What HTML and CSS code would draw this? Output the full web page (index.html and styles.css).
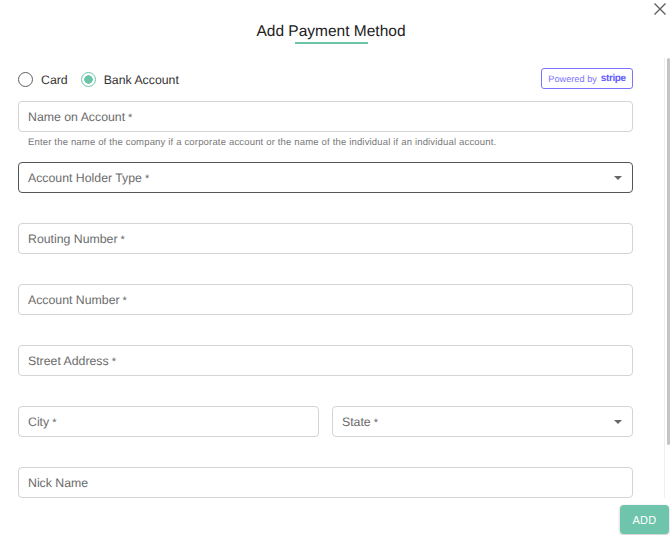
FILE: index.html
```html
<!DOCTYPE html>
<html lang="en">
<head>
    <meta charset="UTF-8">
    <meta name="viewport" content="width=device-width, initial-scale=1.0">
    <title>Add Payment Method</title>
    <link rel="stylesheet" href="styles.css">
</head>
<body>
    <div class="dialog">
        <svg class="close" width="14" height="14" viewBox="0 0 14 14" aria-label="Close">
            <path d="M1.5 1.5L12.5 12.5M12.5 1.5L1.5 12.5" stroke="#5f5f5f" stroke-width="1.4" fill="none"/>
        </svg>

        <div class="head">
            <h1 class="title">Add Payment Method</h1>
            <div class="underline"></div>
        </div>

        <div class="body">
            <div class="track"><div class="thumb"></div></div>
            <div class="type_row">
                <div class="radios">
                    <div class="radio"><span class="dot"></span>Card</div>
                    <div class="radio"><span class="dot checked"></span>Bank Account</div>
                </div>
                <div class="stripe">Powered by <b>stripe</b></div>
            </div>

            <div class="field">Name on Account<span class="req">*</span></div>
            <p class="helper">Enter the name of the company if a corporate account or the name of the individual if an individual account.</p>

            <div class="field select focus">Account Holder Type<span class="req">*</span></div>
            <div class="field gap">Routing Number<span class="req">*</span></div>
            <div class="field gap">Account Number<span class="req">*</span></div>
            <div class="field gap">Street Address<span class="req">*</span></div>
            <div class="split gap">
                <div class="field">City<span class="req">*</span></div>
                <div class="field select">State<span class="req">*</span></div>
            </div>
            <div class="field gap">Nick Name</div>
        </div>

        <div class="foot">
            <button class="add">ADD</button>
        </div>
    </div>
</body>
</html>
```

FILE: styles.css
```css
body {
    margin: 0;
    background-color: #fff;
    overflow: hidden;
    font-family: "Liberation Sans", Arial, sans-serif;
    text-rendering: geometricPrecision;
}

.dialog {
    position: relative;
    width: 670px;
    height: 535px;
    box-sizing: border-box;
    padding-top: 21px;
}

.close {
    position: absolute;
    top: 2px;
    right: 3px;
}

.head {
    display: flex;
    flex-direction: column;
    align-items: center;
    padding-right: 8px;
}

.title {
    margin: 0;
    font-size: 15.5px;
    font-weight: normal;
    line-height: 21px;
    color: #222;
}

.underline {
    width: 73px;
    height: 2px;
    background-color: #6cc5a9;
}

.body {
    position: relative;
    padding: 23px 37px 0 18px;
}

.track {
    position: absolute;
    top: 14px;
    right: 0;
    box-sizing: border-box;
    width: 6px;
    height: 440px;
    border-left: 1px solid #efefef;
}

.thumb {
    position: absolute;
    top: 0;
    right: 0;
    width: 3px;
    height: 387px;
    border-radius: 2px;
    background-color: #c4c4c4;
}

.type_row {
    display: flex;
    justify-content: space-between;
    align-items: center;
    height: 23px;
    margin-bottom: 11px;
}

.radios {
    display: flex;
    gap: 13px;
    margin-top: 2px;
}

.radio {
    display: flex;
    align-items: center;
    gap: 8px;
    font-size: 12.3px;
    color: #333;
}

.dot {
    box-sizing: border-box;
    width: 15px;
    height: 15px;
    border: 1.5px solid #5f5f5f;
    border-radius: 50%;
}

.dot.checked {
    border-color: #6cc5a9;
    background: radial-gradient(circle, #6cc5a9 0 4px, #fff 4.5px);
}

.stripe {
    display: flex;
    align-items: center;
    gap: 4px;
    box-sizing: border-box;
    width: 92px;
    height: 21px;
    justify-content: center;
    border: 1px solid #7a73ff;
    border-radius: 3px;
    font-size: 9.2px;
    color: #7a73ff;
}

.stripe b {
    font-size: 10px;
    letter-spacing: -0.4px;
    color: #635bff;
}

.field {
    position: relative;
    box-sizing: border-box;
    height: 31px;
    padding-left: 9px;
    border: 1px solid #d4d4d4;
    border-radius: 4px;
    font-size: 12.3px;
    line-height: 30px;
    color: #6b6b6b;
}

.focus {
    border-color: #555;
}

.gap {
    margin-top: 30px;
}

.req {
    margin-left: 3px;
    font-size: 11px;
}

.select::after {
    content: "";
    position: absolute;
    top: 13px;
    right: 10px;
    border-left: 4px solid transparent;
    border-right: 4px solid transparent;
    border-top: 4px solid #666;
}

.helper {
    margin: 0;
    height: 30px;
    padding-left: 10px;
    font-size: 9.5px;
    line-height: 21px;
    letter-spacing: 0.17px;
    color: #777;
}

.split {
    display: grid;
    grid-template-columns: 301px 1fr;
    gap: 13px;
}

.foot {
    position: absolute;
    right: 1px;
    bottom: 1px;
}

.add {
    width: 49px;
    height: 29px;
    padding: 0;
    border: none;
    border-radius: 4px;
    background-color: #6fc5ab;
    box-shadow: 0 1px 3px rgba(0, 0, 0, 0.25);
    font-family: inherit;
    font-size: 11px;
    letter-spacing: 0.3px;
    color: #fff;
    cursor: pointer;
}
```
